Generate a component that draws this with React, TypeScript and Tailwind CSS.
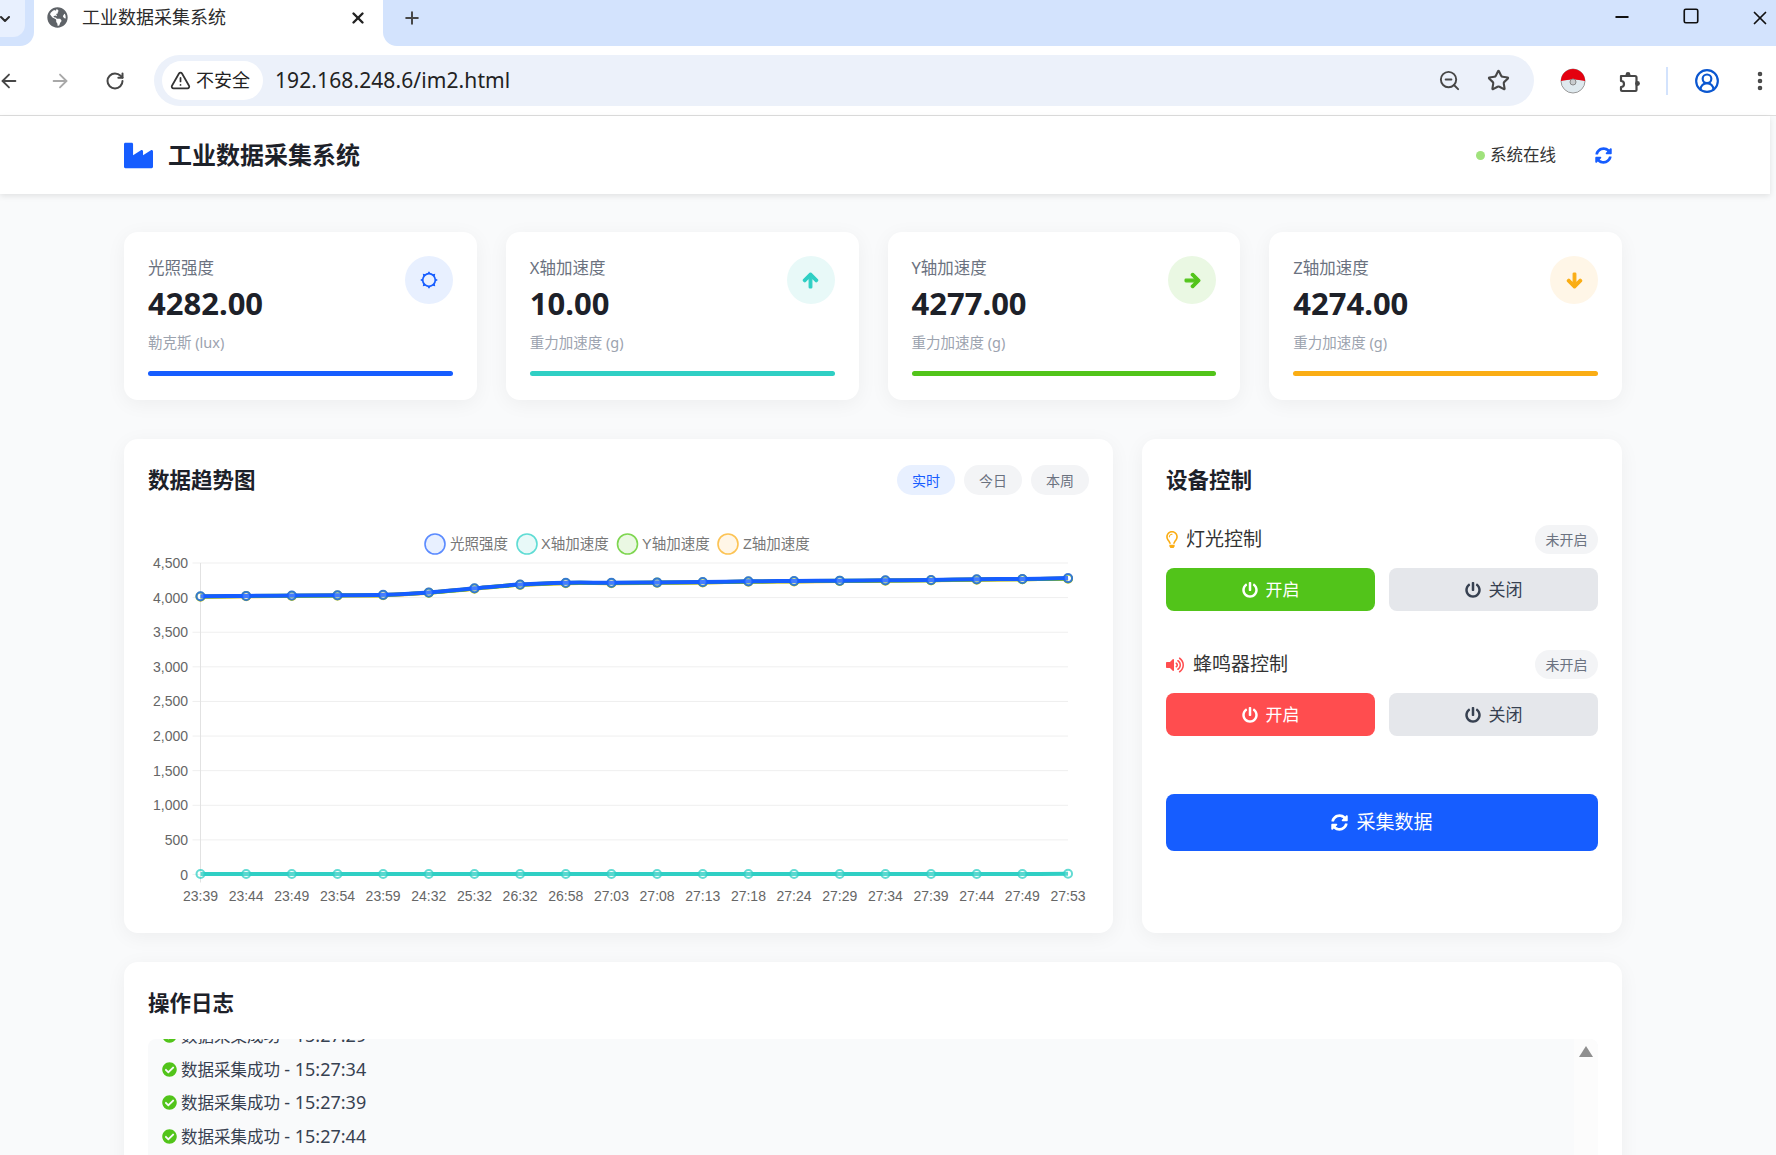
import { useMemo } from "react";
import {
  ArrowLeft,
  ArrowRight,
  ChevronDown,
  CircleUserRound,
  EllipsisVertical,
  Minus,
  Plus,
  RotateCw,
  Square,
  Star,
  TriangleAlert,
  X,
  ZoomOut,
} from "lucide-react";
import {
  FaArrowDown,
  FaArrowRight,
  FaArrowUp,
  FaCheckCircle,
  FaGlobeAmericas,
  FaIndustry,
  FaPowerOff,
  FaRegLightbulb,
  FaSyncAlt,
  FaVolumeUp,
} from "react-icons/fa";

function SunIcon() {
  const rays = [0, 45, 90, 135, 180, 225, 270, 315];
  return (
    <svg width="20" height="20" viewBox="0 0 20 20">
      <circle cx="10" cy="10" r="6.3" fill="none" stroke="currentColor" strokeWidth="1.7" />
      {rays.map((a) => (
        <path key={a} d="M8.4 3.4 L10 1.2 L11.6 3.4 Z" fill="currentColor" transform={`rotate(${a} 10 10)`} />
      ))}
    </svg>
  );
}

const ArrowUpIcon = () => <FaArrowUp size={17} strokeWidth={36} />;
const ArrowRightIcon = () => <FaArrowRight size={17} strokeWidth={36} />;
const ArrowDownIcon = () => <FaArrowDown size={17} strokeWidth={36} />;

const CARDS = [
  { label: "光照强度", value: "4282.00", unit: "勒克斯 (lux)", icon: SunIcon, tint: "bg-[#e8f0ff]", text: "text-[#165dff]", bar: "bg-[#165dff]" },
  { label: "X轴加速度", value: "10.00", unit: "重力加速度 (g)", icon: ArrowUpIcon, tint: "bg-[#e8f9f8]", text: "text-[#2fcfc4]", bar: "bg-[#2fcfc4]" },
  { label: "Y轴加速度", value: "4277.00", unit: "重力加速度 (g)", icon: ArrowRightIcon, tint: "bg-[#eaf8e3]", text: "text-[#52c41a]", bar: "bg-[#52c41a]" },
  { label: "Z轴加速度", value: "4274.00", unit: "重力加速度 (g)", icon: ArrowDownIcon, tint: "bg-[#fff6e7]", text: "text-[#faad14]", bar: "bg-[#faad14]" },
];

const TIMES = ["23:39", "23:44", "23:49", "23:54", "23:59", "24:32", "25:32", "26:32", "26:58", "27:03", "27:08", "27:13", "27:18", "27:24", "27:29", "27:34", "27:39", "27:44", "27:49", "27:53"];
const BASE = [4020, 4025, 4030, 4035, 4040, 4075, 4135, 4190, 4215, 4215, 4220, 4225, 4235, 4240, 4245, 4250, 4255, 4265, 4270, 4282];
const LOGS = ["15:27:29", "15:27:34", "15:27:39", "15:27:44", "15:27:49"];
const TICKS = [0, 500, 1000, 1500, 2000, 2500, 3000, 3500, 4000, 4500];

// chart coordinates are relative to the svg box, which starts at x=148 of the page
const X0 = 52.5;
const STEP = 45.66;
const Y0 = 354.5;
const yOf = (v: number) => Y0 - (v * 311.5) / 4500;

function smoothPath(vals: number[]) {
  const pts = vals.map((v, i) => [X0 + i * STEP, yOf(v)]);
  let d = `M${pts[0][0]} ${pts[0][1]}`;
  for (let i = 0; i < pts.length - 1; i++) {
    const p0 = pts[Math.max(i - 1, 0)];
    const p1 = pts[i];
    const p2 = pts[i + 1];
    const p3 = pts[Math.min(i + 2, pts.length - 1)];
    d += ` C${p1[0] + (p2[0] - p0[0]) / 6} ${p1[1] + (p2[1] - p0[1]) / 6} ${p2[0] - (p3[0] - p1[0]) / 6} ${p2[1] - (p3[1] - p1[1]) / 6} ${p2[0]} ${p2[1]}`;
  }
  return d;
}

function TrendChart() {
  const series = useMemo(
    () => [
      { color: "#faad14", vals: BASE.map((v, i) => (i === 19 ? 4274 : v - 6)) },
      { color: "#52c41a", vals: BASE.map((v, i) => (i === 19 ? 4277 : v - 3)) },
      { color: "#2fcfc4", vals: BASE.map((_, i) => (i === 19 ? 10 : 6)) },
      { color: "#165dff", vals: BASE },
    ],
    [],
  );
  const legend = [
    { cx: 287, tx: 302, label: "光照强度", stroke: "#5b8bff", fill: "#e8f0ff" },
    { cx: 379, tx: 393, label: "X轴加速度", stroke: "#5fdcd4", fill: "#e8f9f8" },
    { cx: 479.5, tx: 494, label: "Y轴加速度", stroke: "#7ed650", fill: "#eaf8e3" },
    { cx: 580, tx: 595, label: "Z轴加速度", stroke: "#fcc354", fill: "#fff6e7" },
  ];

  return (
    <svg width="945" height="395" className="mt-6 font-['Liberation_Sans','Noto_Sans_CJK_SC',sans-serif]">
      {legend.map((l) => (
        <g key={l.label}>
          <circle cx={l.cx} cy="24" r="10" fill={l.fill} stroke={l.stroke} strokeWidth="1.6" />
          <text x={l.tx} y="28.5" fontSize="14.5" fill="#777">{l.label}</text>
        </g>
      ))}
      {TICKS.map((t) => (
        <g key={t}>
          <line x1={X0 - 8} x2={X0 + 19 * STEP} y1={yOf(t)} y2={yOf(t)} stroke="#efefef" />
          <text x="40" y={yOf(t) + 5} fontSize="14" fill="#666" textAnchor="end">{t.toLocaleString("en-US")}</text>
        </g>
      ))}
      <line x1={X0} x2={X0} y1={yOf(4500)} y2={Y0 + 8} stroke="#e2e2e2" />
      {TIMES.map((t, i) => (
        <text key={t} x={X0 + i * STEP} y="381" fontSize="14" fill="#666" textAnchor="middle">{t}</text>
      ))}
      {series.map((s) => (
        <g key={s.color}>
          <path d={smoothPath(s.vals)} fill="none" stroke={s.color} strokeWidth="4" />
          {s.vals.map((v, i) => (
            <circle key={i} cx={X0 + i * STEP} cy={yOf(v)} r="4" fill="#ffffff33" stroke={s.color} strokeOpacity="0.75" strokeWidth="2" />
          ))}
        </g>
      ))}
    </svg>
  );
}

function ExtensionIcon() {
  return (
    <svg width="26" height="26" viewBox="0 0 26 26" className="text-[#474747]">
      <path d="M5 8H19a1.5 1.5 0 0 1 1.5 1.5V22a1 1 0 0 1-1 1H6a1 1 0 0 1-1-1V19a3 3 0 0 0 0-6Z" fill="none" stroke="currentColor" strokeWidth="2.2" strokeLinejoin="round" />
      <circle cx="12" cy="6.5" r="2.4" fill="currentColor" />
      <circle cx="21.5" cy="15.5" r="2.4" fill="currentColor" />
    </svg>
  );
}

function ChromeBars() {
  return (
    <div className="shrink-0 bg-white">
      <div className="flex h-[46px] bg-white">
        <div className="w-[34px] rounded-br-[14px] bg-[#d3e3fd]">
          <div className="flex h-[37px] w-[25px] items-center rounded-br-[12px] bg-[#e8f0fe]">
            <ChevronDown size={16} strokeWidth={3} className="-ml-[3px] text-[#2b2b2b]" />
          </div>
        </div>
        <div className="flex w-[349px] items-center rounded-t-[12px] bg-white pb-[11px] pl-[13px]">
          <FaGlobeAmericas size={21} className="text-[#5f6368]" />
          <span className="ml-[14px] w-[267px] text-[18px] text-[#2b2b2b]">工业数据采集系统</span>
          <X size={18} strokeWidth={3.2} className="text-[#222]" />
        </div>
        <div className="flex flex-1 items-center rounded-bl-[14px] bg-[#d3e3fd] pb-[11px]">
          <Plus size={20} strokeWidth={2.4} className="ml-[19px] text-[#474747]" />
          <div className="ml-auto -mr-[18px] flex pt-[1px]">
            <div className="flex w-[69px] justify-center"><Minus size={20} className="text-[#111]" strokeWidth={2.2} /></div>
            <div className="flex w-[69px] justify-center"><Square size={18} className="text-[#111]" strokeWidth={2.2} /></div>
            <div className="flex w-[69px] justify-center"><X size={22} className="text-[#111]" strokeWidth={1.9} /></div>
          </div>
        </div>
      </div>
      <div className="flex h-[70px] items-center border-b border-[#dedede] bg-white">
        <div className="-ml-[11px] flex w-10 shrink-0 justify-center"><ArrowLeft size={22} className="text-[#474747]" /></div>
        <div className="ml-[11px] flex w-10 shrink-0 justify-center"><ArrowRight size={22} className="text-[#a8a8a8]" /></div>
        <div className="ml-[15px] flex w-10 shrink-0 justify-center"><RotateCw size={20} strokeWidth={2.4} className="text-[#474747]" /></div>
        <div className="ml-[19px] flex h-[51px] w-[1380px] shrink-0 items-center rounded-full bg-[#ecf1fa] pl-2 pr-[24px]">
          <div className="flex h-[39px] w-[101px] items-center gap-[5px] rounded-full bg-white pl-[8px]">
            <TriangleAlert size={21} className="text-[#333]" />
            <span className="text-[18px] text-[#222]">不安全</span>
          </div>
          <span className="ml-[12px] text-[21px] tracking-[0.1px] text-[#222]">192.168.248.6/im2.html</span>
          <ZoomOut size={23} className="ml-auto text-[#474747]" />
          <Star size={23} strokeWidth={2.2} className="ml-[26px] text-[#474747]" />
        </div>
        <div className="ml-[19px] flex w-10 shrink-0 justify-center">
          <svg width="26" height="26" viewBox="0 0 26 26">
            <circle cx="13" cy="13" r="12" fill="#dfe9ee" stroke="#999" />
            <path d="M1 13a12 12 0 0 1 24 0q-12-3-24 0z" fill="#e4000f" />
            <circle cx="13" cy="14" r="3" fill="#c9ccce" stroke="#888" />
          </svg>
        </div>
        <div className="ml-4 flex w-10 shrink-0 justify-center"><ExtensionIcon /></div>
        <div className="ml-[17px] h-[28px] w-[2px] shrink-0 bg-[#d3e3fd]" />
        <div className="ml-[19px] flex w-10 shrink-0 justify-center"><CircleUserRound size={26} className="text-[#0b57d0]" /></div>
        <div className="ml-[13px] flex w-10 shrink-0 justify-center"><EllipsisVertical size={24} strokeWidth={2.6} className="text-[#474747]" /></div>
      </div>
    </div>
  );
}

function PowerBtn({ label, className }: { label: string; className: string }) {
  return (
    <button className={`flex h-[43px] flex-1 items-center justify-center gap-2 rounded-lg text-[17px] ${className}`}>
      <FaPowerOff size={16} />
      {label}
    </button>
  );
}

export default function App() {
  return (
    <div className="h-[1155px] w-[1776px] overflow-hidden bg-[#f9fafb] font-['Noto_Sans','Noto_Sans_CJK_SC',sans-serif]">
      <ChromeBars />

      <header className="flex h-[78px] w-[1770px] items-center bg-white pl-[124px] shadow-[0_2px_6px_rgba(0,0,0,0.1)]">
        <FaIndustry size={29} className="text-[#165dff]" />
        <h1 className="ml-[15px] text-[24px] font-bold text-[#1d2129]">工业数据采集系统</h1>
        <span className="ml-[1116px] h-[9px] w-[9px] rounded-full bg-[#a0e27c]" />
        <span className="ml-[5px] text-[16.5px] text-[#333]">系统在线</span>
        <FaSyncAlt size={17} className="ml-[39px] text-[#165dff]" />
      </header>

      <main className="ml-[124px] w-[1498px] pt-[38px]">
        <div className="grid grid-cols-4 gap-[29px]">
          {CARDS.map((c) => {
            const Icon = c.icon;
            return (
              <div key={c.label} className="h-[168px] rounded-[14px] bg-white p-6 shadow-[0_4px_20px_rgba(0,0,0,0.05)]">
                <div className="flex justify-between">
                  <div>
                    <p className="h-6 text-[16.5px] leading-6 text-[#6b7280]">{c.label}</p>
                    <p className="mt-[3px] h-10 text-[31px] font-bold leading-10 text-[#1d2129]">{c.value}</p>
                    <p className="mt-[9px] h-5 text-[14.5px] leading-5 text-[#9ca3af]">{c.unit}</p>
                  </div>
                  <div className={`flex h-12 w-12 items-center justify-center rounded-full ${c.tint} ${c.text}`}>
                    <Icon />
                  </div>
                </div>
                <div className={`mt-[19px] h-[5px] rounded-full ${c.bar}`} />
              </div>
            );
          })}
        </div>

        <div className="mt-[39px] flex h-[494px] gap-[29px]">
          <section className="w-[989px] rounded-[14px] bg-white px-6 pt-[25px] shadow-[0_4px_20px_rgba(0,0,0,0.05)]">
            <div className="flex h-8 items-center justify-between">
              <h2 className="text-[21.5px] font-bold text-[#1d2129]">数据趋势图</h2>
              <div className="flex gap-[9px] text-[14px]">
                <span className="flex h-[30px] w-[58px] items-center justify-center rounded-full bg-[#e8f0ff] text-[#165dff]">实时</span>
                <span className="flex h-[30px] w-[58px] items-center justify-center rounded-full bg-[#f3f4f6] text-[#6b7280]">今日</span>
                <span className="flex h-[30px] w-[58px] items-center justify-center rounded-full bg-[#f3f4f6] text-[#6b7280]">本周</span>
              </div>
            </div>
            <TrendChart />
          </section>

          <section className="flex-1 rounded-[14px] bg-white px-6 pt-[25px] shadow-[0_4px_20px_rgba(0,0,0,0.05)]">
            <h2 className="flex h-8 items-center text-[21.5px] font-bold text-[#1d2129]">设备控制</h2>

            <div className="mt-[29px] flex h-[29px] items-center justify-between">
              <div className="flex items-center gap-2 text-[19px] text-[#333]">
                <FaRegLightbulb className="h-[17px] w-[12px] text-[#faad14]" />
                灯光控制
              </div>
              <span className="flex h-[29px] w-[63px] items-center justify-center rounded-full bg-[#f3f4f6] text-[14px] text-[#6b7280]">未开启</span>
            </div>
            <div className="mt-[14px] flex gap-[14px]">
              <PowerBtn label="开启" className="bg-[#52c41a] text-white" />
              <PowerBtn label="关闭" className="bg-[#e5e7eb] text-[#374151]" />
            </div>

            <div className="mt-[39px] flex h-[29px] items-center justify-between">
              <div className="flex items-center gap-[9px] text-[19px] text-[#333]">
                <FaVolumeUp size={18} className="text-[#ff4d4f]" />
                蜂鸣器控制
              </div>
              <span className="flex h-[29px] w-[63px] items-center justify-center rounded-full bg-[#f3f4f6] text-[14px] text-[#6b7280]">未开启</span>
            </div>
            <div className="mt-[14px] flex gap-[14px]">
              <PowerBtn label="开启" className="bg-[#ff4d4f] text-white" />
              <PowerBtn label="关闭" className="bg-[#e5e7eb] text-[#374151]" />
            </div>

            <button className="mt-[58px] flex h-[57px] w-full items-center justify-center gap-2 rounded-lg bg-[#165dff] text-[19px] text-white">
              <FaSyncAlt size={17} />
              采集数据
            </button>
          </section>
        </div>

        <section className="mt-[29px] h-[300px] rounded-[14px] bg-white px-6 pt-[25px] shadow-[0_4px_20px_rgba(0,0,0,0.05)]">
          <h2 className="flex h-8 items-center text-[21.5px] font-bold text-[#1d2129]">操作日志</h2>
          <div className="mt-5 flex h-[240px] overflow-hidden rounded-t-lg bg-[#f9fafb]">
            <div className="-mt-[20px] flex-1 pl-[14px]">
              {LOGS.map((t) => (
                <div key={t} className="flex h-[33.5px] items-center gap-[4px] text-[16.5px] text-[#374151]">
                  <FaCheckCircle size={15} className="text-[#52c41a]" />
                  <span>数据采集成功 <span className="text-[18px]">- {t}</span></span>
                </div>
              ))}
            </div>
            <div className="flex w-6 justify-center bg-[#fcfcfc] pt-[7px]">
              <div className="h-0 w-0 border-x-[7px] border-b-[11px] border-x-transparent border-b-[#8f8f8f]" />
            </div>
          </div>
        </section>
      </main>
    </div>
  );
}
